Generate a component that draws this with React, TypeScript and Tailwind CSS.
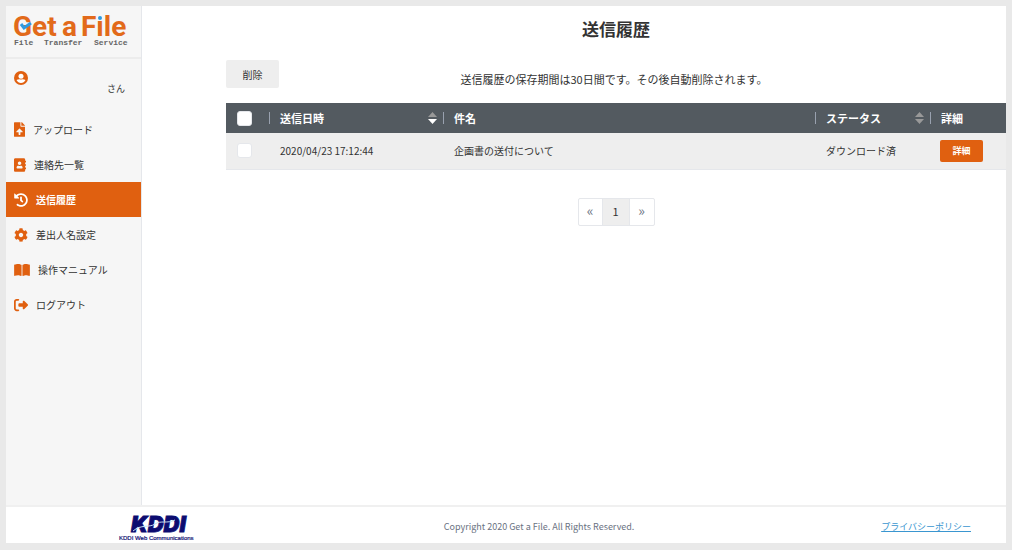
import React, { useState } from 'react';
import { IconType } from 'react-icons';
import { FaAddressBook, FaCog, FaFileUpload, FaHistory } from 'react-icons/fa';
import { FaBookOpen, FaRightFromBracket } from 'react-icons/fa6';

interface MenuItem {
  label: string;
  icon: IconType;
  iconClass: string;
  active?: boolean;
}

interface HistoryRow {
  id: number;
  sentAt: string;
  subject: string;
  status: string;
}

const menuItems: MenuItem[] = [
  { label: 'アップロード', icon: FaFileUpload, iconClass: 'w-[11px] h-[15px]' },
  { label: '連絡先一覧', icon: FaAddressBook, iconClass: 'w-3 h-[14px]' },
  { label: '送信履歴', icon: FaHistory, iconClass: 'w-[14px] h-[14px]', active: true },
  { label: '差出人名設定', icon: FaCog, iconClass: 'w-[14px] h-[14px]' },
  { label: '操作マニュアル', icon: FaBookOpen, iconClass: 'w-4 h-[14px]' },
  { label: 'ログアウト', icon: FaRightFromBracket, iconClass: 'w-[14px] h-[14px]' },
];

const rows: HistoryRow[] = [
  { id: 1, sentAt: '2020/04/23 17:12:44', subject: '企画書の送付について', status: 'ダウンロード済' },
];

const checkboxClass =
  'block w-[15px] h-[15px] appearance-none rounded-[3px] border border-gray-200 bg-white checked:bg-[#e06010]';

const Logo: React.FC = () => (
  <svg className="w-[116px] h-10 overflow-visible" viewBox="0 0 116 40" role="img" aria-label="Get a File">
    <g fill="#e26a1a" fontFamily="Roboto, sans-serif" fontWeight="700" fontSize="28">
      <text x="-1" y="26">Get</text>
      <text x="48" y="26">a</text>
      <text x="67" y="26">File</text>
    </g>
    {/* blue dot of the i */}
    <rect x="83" y="3" width="7" height="7" fill="#f6f6f6" />
    <circle cx="86" cy="8" r="2" fill="#2f9be0" />
    {/* check mark in place of the bar of the G */}
    <path d="M7 14 L10 18 L17 13" fill="none" stroke="#2f9be0" strokeWidth="3" />
    <g fill="#666" fontFamily="Liberation Mono, monospace" fontWeight="700" fontSize="8">
      <text x="0" y="35">File</text>
      <text x="30" y="35">Transfer</text>
      <text x="80" y="35">Service</text>
    </g>
  </svg>
);

const KddiLogo: React.FC = () => (
  <svg className="w-[78px] h-[31px] overflow-visible" viewBox="0 0 78 31" role="img" aria-label="KDDI Web Communications">
    <text
      x="12"
      y="20"
      fill="#0c0c70"
      stroke="#0c0c70"
      strokeWidth="0.8"
      fontFamily="Inter, sans-serif"
      fontWeight="900"
      fontStyle="italic"
      fontSize="22"
    >
      KDDI
    </text>
    <path d="M14 19 C22 12 30 16 36 12 S48 12 56 8" fill="none" stroke="#c4e2f4" strokeWidth="1" />
    <text x="0" y="28" fill="#0c0c70" fontFamily="Liberation Sans, sans-serif" stroke="#0c0c70" strokeWidth="0.2" fontSize="6">
      KDDI Web Communications
    </text>
  </svg>
);

const UserIcon: React.FC = () => (
  <svg className="w-[14px] h-[14px]" viewBox="0 0 28 28">
    <circle cx="14" cy="14" r="14" fill="#e06010" />
    <circle cx="14" cy="10.5" r="5" fill="#fff" />
    <path d="M5 18 Q9 16 14 17 Q19 16 23 18 Q20 24 14 24 Q8 24 5 18 Z" fill="#fff" />
  </svg>
);

const SortArrows: React.FC<{ descending?: boolean }> = ({ descending }) => (
  <svg className="w-[9px] h-3" viewBox="0 0 9 12">
    <path d="M0 5 L4.5 0 L9 5 Z" fill="#999" />
    <path d="M0 7 L4.5 12 L9 7 Z" fill={descending ? '#fff' : '#999'} />
  </svg>
);

const HeaderCell: React.FC<{ label: string; sort?: 'none' | 'descending' }> = ({ label, sort }) => (
  <th scope="col" className="p-0 text-left">
    <div className="flex items-center justify-between pr-[6px]">
      <span className="border-l border-gray-400 pl-[10px] leading-3">{label}</span>
      {sort && (
        <button type="button" aria-label={`${label}で並べ替え`}>
          <SortArrows descending={sort === 'descending'} />
        </button>
      )}
    </div>
  </th>
);

const Sidebar: React.FC = () => (
  <aside className="w-[136px] shrink-0 border-r border-gray-200 bg-[#f6f6f6]">
    <div className="h-[53px] border-b-2 border-[#ececec] pt-1 pl-2">
      <a href="#" className="block">
        <Logo />
      </a>
    </div>
    <div className="h-[53px] px-2 pt-3">
      <UserIcon />
      <p className="pr-2 text-right text-[9px] leading-2">さん</p>
    </div>
    <nav>
      <ul>
        {menuItems.map(({ label, icon: Icon, iconClass, active }) => (
          <li key={label}>
            <a
              href="#"
              className={`flex items-center gap-2 h-[35px] px-2 ${active ? 'bg-[#e06010] text-white font-bold' : ''}`}
            >
              <Icon className={`${iconClass} ${active ? 'text-white' : 'text-[#e06010]'}`} />
              <span>{label}</span>
            </a>
          </li>
        ))}
      </ul>
    </nav>
  </aside>
);

const App: React.FC = () => {
  const [selected, setSelected] = useState<number[]>([]);

  const toggleRow = (id: number) => {
    setSelected(prev => (prev.includes(id) ? prev.filter(x => x !== id) : [...prev, id]));
  };

  const toggleAll = () => {
    setSelected(prev => (prev.length === rows.length ? [] : rows.map(row => row.id)));
  };

  return (
    <div className="min-h-screen flex flex-col bg-[#e9e9e9] p-[6px] pb-[7px] font-['Noto_Sans_CJK_JP',sans-serif] text-[10px] text-[#333]">
      <div className="flex flex-1 bg-white">
        <Sidebar />

        <main className="flex-1 pl-[84px]">
          <h1 className="pt-[11px] text-center text-[17px] leading-6 font-bold">送信履歴</h1>

          <div className="flex items-start mt-[19px]">
            <button type="button" className="h-7 w-[53px] rounded-xs bg-[#eee]">
              削除
            </button>
            <p className="flex-1 pt-[11px] pr-[57px] text-center text-[11px] leading-4">
              送信履歴の保存期間は30日間です。その後自動削除されます。
            </p>
          </div>

          <table className="w-full table-fixed mt-[15px]">
            <colgroup>
              <col className="w-[43px]" />
              <col className="w-[174px]" />
              <col />
              <col className="w-[115px]" />
              <col className="w-[76px]" />
            </colgroup>
            <thead className="bg-[#535a60] text-[11px] text-white">
              <tr className="h-[30px]">
                <th scope="col" className="p-0 pl-[11px]">
                  <input
                    type="checkbox"
                    aria-label="すべて選択"
                    className={checkboxClass}
                    checked={selected.length === rows.length}
                    onChange={toggleAll}
                  />
                </th>
                <HeaderCell label="送信日時" sort="descending" />
                <HeaderCell label="件名" />
                <HeaderCell label="ステータス" sort="none" />
                <HeaderCell label="詳細" />
              </tr>
            </thead>
            <tbody>
              {rows.map(row => (
                <tr key={row.id} className="h-9 border-b border-gray-200 bg-[#eee]">
                  <td className="p-0 pl-[11px]">
                    <input
                      type="checkbox"
                      aria-label={row.subject}
                      className={checkboxClass}
                      checked={selected.includes(row.id)}
                      onChange={() => toggleRow(row.id)}
                    />
                  </td>
                  <td className="p-0 pl-[11px]">{row.sentAt}</td>
                  <td className="p-0 pl-[11px]">{row.subject}</td>
                  <td className="p-0 pl-[11px]">{row.status}</td>
                  <td className="p-0 pl-[10px]">
                    <button
                      type="button"
                      className="block h-[22px] w-[43px] rounded-xs bg-[#e06010] text-[9px] font-bold text-white"
                    >
                      詳細
                    </button>
                  </td>
                </tr>
              ))}
            </tbody>
          </table>

          <nav className="flex justify-center mt-7">
            <div className="flex h-7 divide-x divide-gray-200 rounded-xs border border-gray-200">
              <button type="button" aria-label="前へ" className="w-6 pb-1 text-sm leading-4 text-gray-500">
                «
              </button>
              <button type="button" aria-current="page" className="w-[27px] bg-[#eee] text-[11px]">
                1
              </button>
              <button type="button" aria-label="次へ" className="w-6 pb-1 text-sm leading-4 text-gray-500">
                »
              </button>
            </div>
          </nav>
        </main>
      </div>

      <footer className="flex items-center justify-between h-[38px] border-t-2 border-[#f0f0f0] bg-white pt-1 pl-[113px] pr-[35px] text-[9px] text-gray-500">
        <KddiLogo />
        <p>Copyright 2020 Get a File. All Rights Reserved.</p>
        <a href="#" className="text-[#3a96d0] underline">
          プライバシーポリシー
        </a>
      </footer>
    </div>
  );
};

export default App;
